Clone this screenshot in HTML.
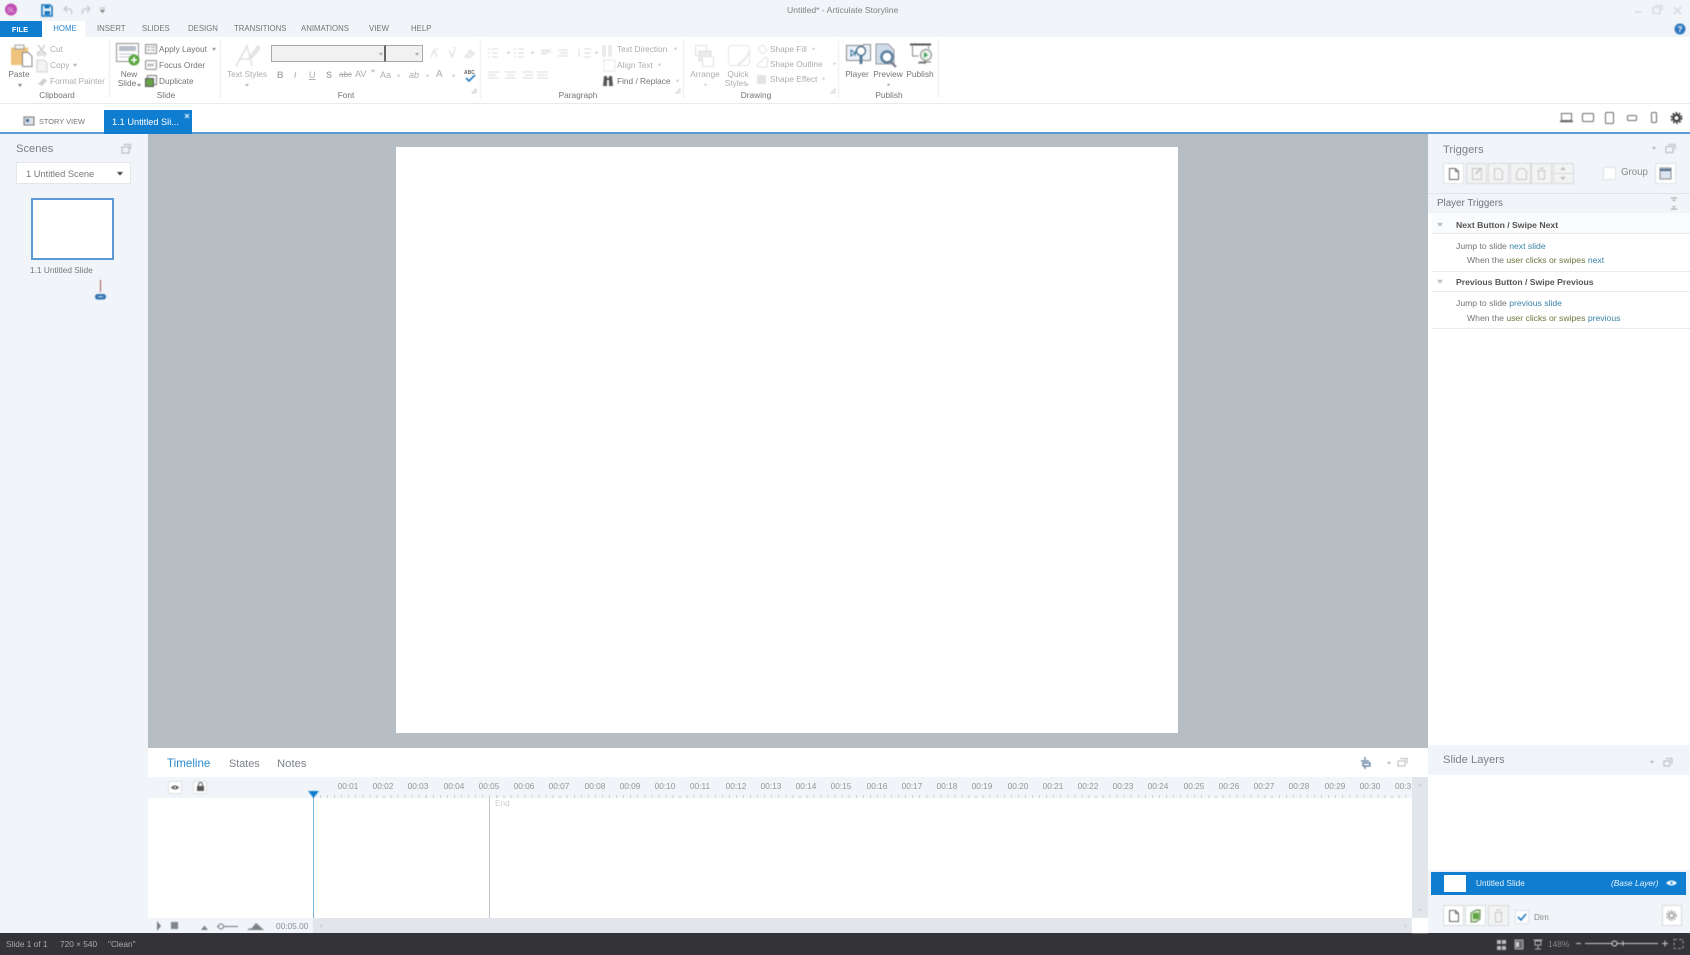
<!DOCTYPE html>
<html><head><meta charset="utf-8"><title>Untitled* - Articulate Storyline</title>
<style>
html,body{margin:0;padding:0;background:#fff}
#app{position:relative;width:1690px;height:955px;overflow:hidden;font-family:"Liberation Sans",sans-serif;background:#fff}
.b{position:absolute}
.t{position:absolute;white-space:nowrap;line-height:14px;font-size:8.3px;color:#747474;filter:blur(.35px)}
.m{font-size:7.8px;top:22px}
.c{transform:translateX(-50%)}
.d{color:#adadad}
.h{font-size:11.2px;color:#7d8288}
.r{color:#959595;top:779px;font-size:8.300px}
.p{font-size:8.650px}
.g{color:#6a7a3f}.n{color:#3a84a8}
svg{position:absolute;left:0;top:0;filter:blur(.4px)}
</style></head><body><div id="app">
<div class="b" style="left:0;top:0;width:1690px;height:37px;background:#f1f4f8"></div>
<div class="b" style="left:0;top:21px;width:42px;height:16px;background:#0f7dd0"></div>
<div class="b" style="left:42px;top:21px;width:43px;height:16px;background:#fff"></div>
<div class="b" style="left:0;top:37px;width:1690px;height:66px;background:#fff;border-bottom:1px solid #e8eaec"></div>
<div class="b" style="left:0;top:132px;width:1690px;height:2px;background:#5b9bd5"></div>
<div class="b" style="left:104px;top:110px;width:88px;height:24px;background:#0f7dd0"></div>
<div class="b" style="left:0;top:134px;width:148px;height:799px;background:#f1f4f8"></div>
<div class="b" style="left:148px;top:134px;width:1280px;height:614px;background:#b6bec4"></div>
<div class="b" style="left:396px;top:147px;width:782px;height:586px;background:#fff"></div>
<div class="b" style="left:1428px;top:134px;width:262px;height:611px;background:#fff;border-left:0"></div>
<div class="b" style="left:1428px;top:134px;width:262px;height:59px;background:#f1f4f8"></div>
<div class="b" style="left:1428px;top:193px;width:262px;height:20px;background:#f1f4f8;border-top:1px solid #e3e6e9;box-sizing:border-box"></div>
<div class="b" style="left:1432px;top:213px;width:258px;height:21px;background:#fafbfc;border-bottom:1px solid #e8eaec;box-sizing:border-box"></div>
<div class="b" style="left:1432px;top:271px;width:258px;height:1px;background:#e8eaec"></div>
<div class="b" style="left:1432px;top:291px;width:258px;height:1px;background:#e8eaec"></div>
<div class="b" style="left:1432px;top:328px;width:258px;height:1px;background:#e8eaec"></div>
<div class="b" style="left:1428px;top:745px;width:262px;height:30px;background:#f1f4f8"></div>
<div class="b" style="left:1428px;top:870px;width:262px;height:63px;background:#f1f4f8"></div>
<div class="b" style="left:1431px;top:872px;width:255px;height:23px;background:#0f7dd0"></div>
<div class="b" style="left:1444px;top:875px;width:22px;height:17px;background:#fff"></div>
<div class="b" style="left:148px;top:777px;width:1264px;height:21px;background:#f1f4f8"></div>
<div class="b" style="left:320px;top:795px;width:1092px;height:3px;background:repeating-linear-gradient(90deg,#cfd2d5 0 1px,transparent 1px 7.05px)"></div>
<div class="b" style="left:1412px;top:777px;width:16px;height:141px;background:#e2e6ea"></div>
<div class="b" style="left:148px;top:918px;width:165px;height:15px;background:#f1f4f8"></div>
<div class="b" style="left:313px;top:918px;width:1099px;height:15px;background:#e2e6ea"></div>
<div class="b" style="left:313px;top:793px;width:1px;height:125px;background:#7db6de"></div>
<div class="b" style="left:489px;top:798px;width:1px;height:120px;background:#c3c6c9"></div>
<div class="b" style="left:0;top:933px;width:1690px;height:22px;background:#343338"></div>
<div class="b" style="left:16px;top:162px;width:115px;height:22px;background:#fff;border:1px solid #e4e7ea;box-sizing:border-box"></div>
<div class="b" style="left:31px;top:198px;width:83px;height:62px;background:#fff;border:2px solid #5b9bd5;box-sizing:border-box"></div>
<div class="b" style="left:271px;top:45px;width:115px;height:17px;background:#f1f1f1;border:1px solid #a8a8a8;box-sizing:border-box;border-right:2px solid #666"></div>
<div class="b" style="left:386px;top:45px;width:37px;height:17px;background:#f1f1f1;border:1px solid #a8a8a8;border-left:0;box-sizing:border-box"></div>

<svg width="1690" height="955" viewBox="0 0 1690 955" fill="none">
<circle cx="11" cy="9.500" r="6" fill="#c04fb3"/><text x="11" y="12" font-size="6" fill="#f3d5ee" text-anchor="middle" font-family="Liberation Sans">SL</text>
<path d="M42 5h8l2 2v9H42z" stroke="#1a78c2" stroke-width="1.6"/><path d="M44.500 5.500h5v3h-5zM44.500 11h5.500v4h-5.500z" fill="#1a78c2"/>
<path d="M64 9l3-3M64 9l3 3M64 9h5a3 3 0 0 1 2 5" stroke="#c4c8cc" stroke-width="1.3"/>
<path d="M90 9l-3-3M90 9l-3 3M90 9h-5a3 3 0 0 0-2 5" stroke="#c4c8cc" stroke-width="1.3"/>
<path d="M100 8h5M100 10h5l-2.5 3z" fill="#8d8d8d" stroke="#8d8d8d" stroke-width=".5"/>
<!-- paste -->
<path d="M11 47.500h17v17.500H11z" fill="#eec37e"/><path d="M15 45h9v4h-9z" fill="#f4f4f4" stroke="#8a8a8a" stroke-width=".8"/>
<path d="M22.500 52.500h6l3.500 4v10h-9.500z" fill="#fff" stroke="#8a8a8a"/>
<path d="M18 84h4l-2 3z" fill="#777"/>
<path d="M38 45l7 9M45 45l-7 9" stroke="#c9c9c9" stroke-width="1.3"/><circle cx="39" cy="54" r="1.8" stroke="#c9c9c9"/><circle cx="44" cy="54" r="1.8" stroke="#c9c9c9"/>
<path d="M37 60h7l3 3v9H37z" stroke="#d2d2d2" fill="#f4f4f4"/>
<path d="M38 84l6-6 3 3-5 5z" fill="#d0d0d0"/>
<path d="M73 64h4l-2 2.500z" fill="#999"/>
<!-- separators -->
<path d="M109.500 40v58M220.500 40v58M480.500 40v58M683.500 40v58M838.500 40v58M938.500 40v58" stroke="#e9ebed"/>
<!-- new slide -->
<rect x="116.500" y="43.500" width="22" height="18" fill="#fff" stroke="#8f8f8f"/><rect x="119" y="46" width="17" height="5" fill="#b9bcc9"/><path d="M119 54h16M119 57h16" stroke="#c4c7d2"/>
<circle cx="134" cy="60" r="5.500" fill="#5aa83e"/><path d="M134 57v6M131 60h6" stroke="#fff" stroke-width="1.6"/>
<path d="M137 84h4l-2 2.500z" fill="#777"/>
<rect x="145.500" y="44.500" width="11" height="9" fill="#f5f5f5" stroke="#8f8f8f"/><path d="M147 47h3M147 50h3M151 47h4M151 50h4" stroke="#aaa"/>
<rect x="145.500" y="60.500" width="11" height="9" rx="1" fill="#f5f5f5" stroke="#8f8f8f"/><path d="M148 65h6" stroke="#777" stroke-width="2" stroke-dasharray="1 1"/>
<rect x="147.500" y="75.500" width="9" height="9" fill="#fff" stroke="#777"/><rect x="145.500" y="78.500" width="8" height="8" fill="#67a34a" stroke="#555"/>
<path d="M212 48h4l-2 2.500z" fill="#777"/>
<!-- text styles -->
<path d="M236 66l11-20 5 20M240 59h11" stroke="#dcdcdc" stroke-width="1.3"/><path d="M250 56l8-10 2 2-8 10z" fill="#eaeaea" stroke="#d8d8d8"/>
<path d="M245 84h4l-2 2.500z" fill="#aaa"/>
<path d="M379 53h4l-2 2.500zM415 53h4l-2 2.500z" fill="#999"/>
<path d="M431 57l3-7 3 7M435 49h3M449 50l3 7 3-7M453 48h3" stroke="#d8d8d8"/>
<path d="M465 57l5-7 4 4-5 4zM470 53h4" stroke="#dcdcdc" fill="#f1f1f1"/>
<path d="M371 70h4l-2 2.500zM397 75h3l-1.500 2zM426 75h3l-1.500 2zM452 75h3l-1.500 2z" fill="#aaa"/>
<path d="M466 78l3 3 6-6" stroke="#1a78c2" stroke-width="1.6"/>
<path d="M472 93h4v-4z" stroke="#ccc"/>
<!-- paragraph -->
<g stroke="#dadada"><path d="M488 49h2M492 49h6M488 53h2M492 53h6M488 57h2M492 57h6M514 49h2M518 49h6M514 53h2M518 53h6M514 57h2M518 57h6"/><path d="M541 50h10M541 52h10M541 54h6M558 50h10M560 53h8M558 56h10"/><path d="M579 49v8M584 49h7M584 53h7M584 57h7"/>
<path d="M488 72h11M488 75h8M488 78h11M505 72h11M507 75h7M505 78h11M522 72h11M525 75h8M522 78h11M537 72h11M537 75h11M537 78h11"/>
<path d="M603 46h2v10h-2zM609 46h2v10h-2z"/><path d="M604 60h11v11h-11z" stroke-dasharray="2 1"/></g>
<path d="M507 52h3l-1.500 2zM531 52h3l-1.500 2zM595 52h3l-1.500 2zM674 48h3l-1.500 2zM658 64h3l-1.500 2zM676 80h3l-1.500 2z" fill="#b0b0b0"/>
<path d="M604 76h3v10h-4zM609 76h3l1 10h-4z" fill="#555"/><path d="M606 79h4" stroke="#555" stroke-width="2"/>
<path d="M676 93h4v-4zM831 93h4v-4z" stroke="#d5d5d5"/>
<!-- drawing -->
<g stroke="#e0e0e0" fill="#fff"><rect x="695.500" y="45.500" width="11" height="10"/><rect x="699" y="51" width="12" height="10" fill="#ececec"/><rect x="702.500" y="56.500" width="11" height="10"/></g>
<rect x="728.500" y="45.500" width="21" height="20" rx="3" stroke="#e6e6e6"/><path d="M737 66l9-8 4-7" stroke="#e8e8e8" stroke-width="2"/>
<path d="M704 84h3l-1.500 2zM746 84h3l-1.500 2zM812 48h3l-1.500 2zM833 63h3l-1.500 2zM822 78h3l-1.500 2z" fill="#bbb"/>
<path d="M758 48l5-3 4 5-5 4zM757 65l9-8 2 2-1 8h-9z" stroke="#e2e2e2"/><rect x="757" y="75" width="9" height="9" fill="#e4e4e4"/>
<!-- player -->
<path d="M846.500 45.500h17v-1h7v16h-24z" fill="#eaf1f8" stroke="#8a8a8a"/><path d="M851 50l4 3-4 3zM856 50l-1 6" stroke="#3d6f96"/><circle cx="861" cy="51" r="4.500" fill="#fff" stroke="#557b99" stroke-width="1.5"/><path d="M861 56v8" stroke="#557b99" stroke-width="3"/>
<!-- preview -->
<path d="M876 44h12l6 6v14h-18z" fill="#cfdcec" stroke="#9a9a9a"/><circle cx="887" cy="57" r="5.500" fill="#fff" stroke="#5a7e9c" stroke-width="2.500"/><path d="M891 62l5 5" stroke="#778" stroke-width="2"/>
<path d="M887 84h3l-1.500 2z" fill="#777"/>
<!-- publish -->
<path d="M910 44.500h21" stroke="#555" stroke-width="2"/><path d="M912.500 46v10h6M928.500 46v3" stroke="#888"/><circle cx="926" cy="55" r="5.500" fill="#eaf4ea" stroke="#888"/><path d="M924 52l4 3-4 3z" fill="#46a05a"/><path d="M919 62h12M925 60v4M918 63h8" stroke="#777"/>
<!-- window controls -->
<path d="M1635 12h7" stroke="#cfd2d5" stroke-width="1"/><path d="M1653 7.500h7v6h-7zM1655 5.500h7v5" stroke="#d0d3d6"/><path d="M1674 7l7 7M1681 7l-7 7" stroke="#cfd2d5" stroke-width="1.2"/>
<circle cx="1680" cy="29" r="5.500" fill="#2f78bd"/><text x="1680" y="32" font-size="8" font-weight="bold" fill="#fff" text-anchor="middle" font-family="Liberation Sans">?</text>
<!-- tab -->
<path d="M24 117h10v8H24z" fill="#d9e2ec" stroke="#777"/><path d="M26 119h3v3h-3z" fill="#44688a"/>
<path d="M185 114l4 4M189 114l-4 4" stroke="#fff"/>
<!-- device toolbar -->
<g stroke="#6a6a6a"><path d="M1561.500 113.500h10v7h-10z"/><path d="M1560 121.500h13" stroke-width="1.600"/><rect x="1582.500" y="113.500" width="11" height="8" rx="1"/><rect x="1605.500" y="112.500" width="8" height="11" rx="1"/><rect x="1627.500" y="115.500" width="9" height="5" rx="1"/><rect x="1651.500" y="112.500" width="5" height="10" rx="1"/></g>
<circle cx="1676.500" cy="118" r="3" stroke="#333" stroke-width="2"/><circle cx="1676.500" cy="118" r="5" stroke="#333" stroke-width="1.800" stroke-dasharray="1.800 1.400"/>
<!-- panel icons -->
<g stroke="#b4b8bc"><path d="M122 147h7v6h-7zM123.500 144.500h7v5M1666 146.500h7v6h-7zM1668 144.500h7v5"/><path d="M1664 761h6v5h-6zM1666 758.500h6v5M1398 761h7v5h-7zM1400 758.500h7v5"/></g>
<path d="M1652 147h4l-2 2.500zM1650 761h4l-2 2.500zM1387 762h4l-2 2.500z" fill="#a8abae"/>
<path d="M117 172h6l-3 3.500z" fill="#333"/>
<path d="M100.500 280v12" stroke="#a85a5a"/><rect x="95" y="294" width="11" height="5.500" rx="2.700" fill="#2f70b0"/><path d="M98 296.700h5" stroke="#dbe8f4"/>
<!-- trigger toolbar -->
<g fill="#fff" stroke="#dfe2e5"><rect x="1443.500" y="163.500" width="20" height="20"/></g>
<g fill="#f3f3f3" stroke="#d6d9dc"><rect x="1466.500" y="163.500" width="20" height="20"/><rect x="1488.500" y="163.500" width="20" height="20"/><rect x="1510.500" y="163.500" width="20" height="20"/><rect x="1531.500" y="163.500" width="20" height="20"/><rect x="1553.500" y="163.500" width="20" height="20"/></g>
<path d="M1449.500 168.500h6l3 3v8h-9zM1455.500 168.500v3h3" stroke="#666" fill="#fff"/>
<path d="M1472.500 168.500h9v11h-9z" stroke="#c8c8c8"/><path d="M1476 174l5-6" stroke="#c0c0c0" stroke-width="1.500"/>
<path d="M1494.500 168.500h5l3 3v8h-8z" stroke="#c8c8c8"/><path d="M1516.500 172l3-3.500h4l3 3v8h-10z" stroke="#c8c8c8"/>
<path d="M1537.500 170.500h8M1538.500 171v8h6v-8M1540 169v-1h3v1" stroke="#c8c8c8"/>
<path d="M1553 173.500h20" stroke="#d6d9dc"/><path d="M1560 170l3-3 3 3zM1560 177l3 3 3-3z" fill="#bbb"/>
<rect x="1603.500" y="167.500" width="12" height="12" fill="#fff" stroke="#e0e2e5"/>
<rect x="1655.500" y="163.500" width="20" height="20" fill="#fff" stroke="#dfe2e5"/><rect x="1660" y="168" width="11" height="11" fill="#dbe5f1" stroke="#888"/><path d="M1660 170h11" stroke="#4d6c8c" stroke-width="2"/>
<path d="M1671 198h6M1671 209h6" stroke="#999"/><path d="M1672 201l2-2 2 2zM1672 206l2 2 2-2z" fill="#aaa"/>
<path d="M1437 223h6l-3 3.500zM1437 280h6l-3 3.500z" fill="#b2b2b2"/>
<!-- timeline -->
<rect x="168.500" y="781.500" width="13" height="12" fill="#fff" stroke="#dcdfe2"/><rect x="193.500" y="781.500" width="13" height="12" fill="#fff" stroke="#dcdfe2"/>
<path d="M171 787.500q4-4 8 0q-4 4-8 0z" fill="#555"/><circle cx="175" cy="787.500" r="1" fill="#fff"/>
<rect x="197" y="786" width="7" height="5" fill="#555"/><path d="M198.500 786v-1.500a2 2 0 0 1 4 0v1.500" stroke="#555"/>
<path d="M308 791h11l-5.500 7z" fill="#0f7dd0"/>
<path d="M157 921l4 5-4 5z" fill="#787f86"/><rect x="171" y="922" width="7" height="7" fill="#7e858b"/>
<path d="M201 930l3.500-4.500 3.500 4.500z" fill="#7d8287"/><circle cx="221" cy="926.500" r="2.500" stroke="#70757a"/><path d="M217 926.500h2M224 926.500h14" stroke="#70757a"/><path d="M247 930l3-2 1 1 5-6 8 7z" fill="#7d8287"/>
<path d="M320 926l2-2v4zM1405 924l2 2-2 2z" fill="#c3c7ca"/>
<path d="M1418 786l2-2 2 2zM1418 909l2 2 2-2z" fill="#c3c7ca"/>
<rect x="1412" y="918" width="16" height="15" fill="#fff"/>
<path d="M1365 757v3M1361 761h8M1363 763h7v3h-7zM1365 766v3" stroke="#5a7a9a" stroke-width="1.300"/>
<!-- layers -->
<path d="M1666 883q5.500-5 11 0q-5.500 5-11 0z" fill="#fff"/><circle cx="1671.500" cy="883" r="1.200" fill="#0f7dd0"/>
<g stroke="#d8dbde" fill="#fff"><rect x="1443.500" y="905.500" width="20" height="20"/><rect x="1465.500" y="905.500" width="20" height="20"/><rect x="1662.500" y="905.500" width="19" height="20"/></g><rect x="1488.500" y="905.500" width="20" height="20" fill="#f3f3f3" stroke="#d6d9dc"/>
<path d="M1449.500 910.500h6l3 3v8h-9zM1455.500 910.500v3h3" stroke="#666"/>
<path d="M1471 913l5-3h4v9l-4 3h-5z" fill="#cfe3c2" stroke="#5e8a4a"/><rect x="1473" y="913" width="6" height="6" fill="#5ea43f"/>
<path d="M1494.500 912.500h8M1495.500 913v9h6v-9M1497 911v-1h3v1" stroke="#c8c8c8"/>
<rect x="1515.500" y="910.500" width="13" height="13" fill="#fff" stroke="#dfe2e5"/><path d="M1518 917l3 3 5-6" stroke="#1a78c2" stroke-width="1.600"/>
<circle cx="1671.500" cy="915.500" r="2.500" stroke="#999" stroke-width="1.500"/><circle cx="1671.500" cy="915.500" r="4.500" stroke="#999" stroke-width="1.500" stroke-dasharray="1.600 1.300"/>
<!-- status -->
<g fill="#b9bbbe"><rect x="1497" y="940" width="4" height="4"/><rect x="1502" y="940" width="4" height="4"/><rect x="1497" y="946" width="4" height="4"/><rect x="1502" y="946" width="4" height="4"/></g>
<path d="M1515 940h8v9h-8z" fill="#6a6a6e" stroke="#aeb0b3"/><path d="M1516 942h3v5h-3z" fill="#cfd0d2"/>
<path d="M1533.500 940h9M1535 941h6v4h-6zM1538 945v4M1535 949h6" stroke="#aeb0b3"/>
<path d="M1576 943.500h5M1585 943.500h73M1662 943.500h6M1665 940.500v6" stroke="#c9cacc" stroke-width="1"/><circle cx="1614.500" cy="943.500" r="2.500" fill="#343338" stroke="#e0e0e0"/><path d="M1623 941v5" stroke="#c9cacc"/>
<path d="M1674 939.500h9v9h-9z" stroke="#999" stroke-dasharray="3 2"/>
</svg>

<span class="t" style="left:787px;top:3px;color:#808080;font-size:8.600px">Untitled* - Articulate Storyline</span>
<span class="t c" style="left:20px;top:23px;color:#fff;font-weight:bold;font-size:7.500px">FILE</span>
<span class="t c m" style="left:65px;color:#2a8ad4">HOME</span>
<span class="t m" style="left:97px">INSERT</span><span class="t m" style="left:142px">SLIDES</span><span class="t m" style="left:188px">DESIGN</span><span class="t m" style="left:234px">TRANSITIONS</span><span class="t m" style="left:301px">ANIMATIONS</span><span class="t m" style="left:369px">VIEW</span><span class="t m" style="left:411px">HELP</span>

<span class="t c" style="left:19px;top:67px">Paste</span>
<span class="t d" style="left:50px;top:42px">Cut</span><span class="t d" style="left:50px;top:58px">Copy</span><span class="t d" style="left:50px;top:74px">Format Painter</span>
<span class="t c" style="left:57px;top:88px">Clipboard</span>
<span class="t c" style="left:129px;top:67px">New</span><span class="t c" style="left:127px;top:76px">Slide</span>
<span class="t" style="left:159px;top:42px">Apply Layout</span><span class="t" style="left:159px;top:58px">Focus Order</span><span class="t" style="left:159px;top:74px">Duplicate</span>
<span class="t c" style="left:166px;top:88px">Slide</span>
<span class="t c d" style="left:247px;top:67px">Text Styles</span>
<span class="t d" style="left:277px;top:68px;font-weight:bold;font-size:9px">B</span><span class="t d" style="left:294px;top:68px;font-style:italic;font-size:9px">I</span><span class="t d" style="left:309px;top:68px;text-decoration:underline;font-size:9px">U</span><span class="t d" style="left:326px;top:68px;font-size:9px;font-weight:bold">S</span><span class="t d" style="left:339px;top:68px;font-size:8px;text-decoration:line-through">abc</span><span class="t d" style="left:355px;top:67px;font-size:9px">AV</span><span class="t d" style="left:380px;top:68px;font-size:9px">Aa</span><span class="t d" style="left:409px;top:68px;font-size:9px;font-style:italic">ab</span><span class="t d" style="left:436px;top:68px;font-size:10px">A</span>
<span class="t" style="left:464px;top:66px;font-size:5px;font-weight:bold;color:#666">ABC</span>
<span class="t c" style="left:346px;top:88px">Font</span>
<span class="t d" style="left:617px;top:42px">Text Direction</span><span class="t d" style="left:617px;top:58px">Align Text</span><span class="t" style="left:617px;top:74px">Find / Replace</span>
<span class="t c" style="left:578px;top:88px">Paragraph</span>
<span class="t c d" style="left:705px;top:67px">Arrange</span><span class="t c d" style="left:738px;top:67px">Quick</span><span class="t c d" style="left:736px;top:76px">Styles</span>
<span class="t d" style="left:770px;top:42px">Shape Fill</span><span class="t d" style="left:770px;top:57px">Shape Outline</span><span class="t d" style="left:770px;top:72px">Shape Effect</span>
<span class="t c" style="left:756px;top:88px">Drawing</span>
<span class="t c" style="left:857px;top:67px">Player</span><span class="t c" style="left:888px;top:67px">Preview</span><span class="t c" style="left:920px;top:67px">Publish</span>
<span class="t c" style="left:889px;top:88px">Publish</span>

<span class="t" style="left:39px;top:115px;font-size:7.400px">STORY VIEW</span>
<span class="t" style="left:112px;top:115px;color:#fff;font-size:9.200px">1.1 Untitled Sli...</span>

<span class="t h" style="left:16px;top:142px">Scenes</span>
<span class="t" style="left:26px;top:167px;font-size:9.300px;color:#777">1 Untitled Scene</span>
<span class="t" style="left:30px;top:263px;color:#777">1.1 Untitled Slide</span>

<span class="t h" style="left:167px;top:757px;color:#2a88cc;font-size:11.600px">Timeline</span><span class="t h" style="left:229px;top:757px;font-size:10.800px">States</span><span class="t h" style="left:277px;top:757px;font-size:11.300px">Notes</span>
<span class="t c r" style="left:348px">00:01</span><span class="t c r" style="left:383px">00:02</span><span class="t c r" style="left:418px">00:03</span><span class="t c r" style="left:454px">00:04</span><span class="t c r" style="left:489px">00:05</span><span class="t c r" style="left:524px">00:06</span><span class="t c r" style="left:559px">00:07</span><span class="t c r" style="left:595px">00:08</span><span class="t c r" style="left:630px">00:09</span><span class="t c r" style="left:665px">00:10</span><span class="t c r" style="left:700px">00:11</span><span class="t c r" style="left:736px">00:12</span><span class="t c r" style="left:771px">00:13</span><span class="t c r" style="left:806px">00:14</span><span class="t c r" style="left:841px">00:15</span><span class="t c r" style="left:877px">00:16</span><span class="t c r" style="left:912px">00:17</span><span class="t c r" style="left:947px">00:18</span><span class="t c r" style="left:982px">00:19</span><span class="t c r" style="left:1018px">00:20</span><span class="t c r" style="left:1053px">00:21</span><span class="t c r" style="left:1088px">00:22</span><span class="t c r" style="left:1123px">00:23</span><span class="t c r" style="left:1158px">00:24</span><span class="t c r" style="left:1194px">00:25</span><span class="t c r" style="left:1229px">00:26</span><span class="t c r" style="left:1264px">00:27</span><span class="t c r" style="left:1299px">00:28</span><span class="t c r" style="left:1335px">00:29</span><span class="t c r" style="left:1370px">00:30</span><span class="t r" style="left:1395px;width:16px;overflow:hidden">00:31</span>
<span class="t" style="left:495px;top:796px;color:#cfcfcf">End</span>
<span class="t" style="left:276px;top:919px;color:#8a8f94">00:05.00</span>

<span class="t h" style="left:1443px;top:143px">Triggers</span>
<span class="t" style="left:1621px;top:166px;font-size:9.700px;color:#8a8a8a">Group</span>
<span class="t" style="left:1437px;top:197px;font-size:9.800px;color:#6f747a">Player Triggers</span>
<span class="t p" style="left:1456px;top:218px;font-weight:bold;color:#555">Next Button / Swipe Next</span>
<span class="t p" style="left:1456px;top:239px">Jump to slide <span class="n">next slide</span></span>
<span class="t p" style="left:1467px;top:253px">When the <span class="g">user clicks or swipes</span> <span class="n">next</span></span>
<span class="t p" style="left:1456px;top:275px;font-weight:bold;color:#555">Previous Button / Swipe Previous</span>
<span class="t p" style="left:1456px;top:296px">Jump to slide <span class="n">previous slide</span></span>
<span class="t p" style="left:1467px;top:311px">When the <span class="g">user clicks or swipes</span> <span class="n">previous</span></span>

<span class="t h" style="left:1443px;top:753px">Slide Layers</span>
<span class="t" style="left:1476px;top:876px;color:#e8f3fb">Untitled Slide</span>
<span class="t" style="left:1611px;top:876px;color:#e8f3fb;font-style:italic">(Base Layer)</span>
<span class="t" style="left:1534px;top:910px;color:#8a8a8a">Dim</span>

<span class="t" style="left:6px;top:937px;color:#aaabad">Slide 1 of 1</span><span class="t" style="left:60px;top:937px;color:#aaabad">720 × 540</span><span class="t" style="left:108px;top:937px;color:#aaabad">"Clean"</span>
<span class="t" style="left:1548px;top:937px;color:#858689">148%</span>
</div></body></html>
